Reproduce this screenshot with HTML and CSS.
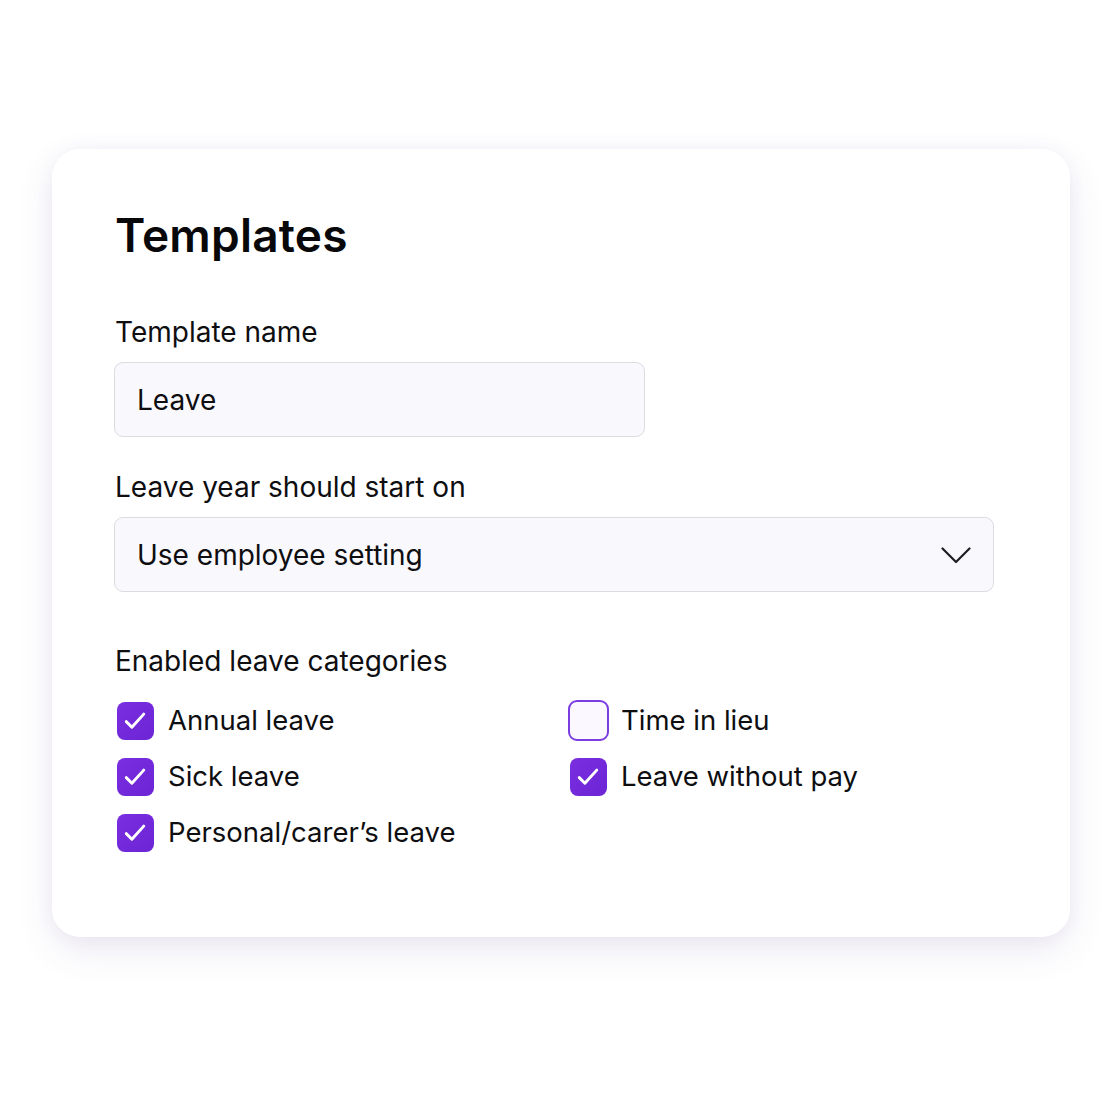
FILE: index.html
```html
<!DOCTYPE html>
<html lang="en">
<head>
<meta charset="utf-8">
<title>Templates</title>
<link rel="stylesheet" href="styles.css">
</head>
<body>
<main class="card">
  <h1 class="title">Templates</h1>

  <label class="label label-first">Template name</label>
  <div class="field">Leave</div>

  <label class="label">Leave year should start on</label>
  <div class="field select">
    <span>Use employee setting</span>
    <svg class="chevron" width="30" height="17" viewBox="0 0 30 17" aria-hidden="true">
      <path d="M1.5 1.5 L15 15 L28.5 1.5" fill="none" stroke="#1d1d22" stroke-width="2.2" stroke-linecap="round" stroke-linejoin="round"/>
    </svg>
  </div>

  <label class="label label-cats">Enabled leave categories</label>
  <div class="cats">
    <div class="cat"><span class="box checked"><svg viewBox="0 0 24 24"><path d="M5 12.5 L9.5 17 L19 6.5" fill="none" stroke="#fff" stroke-width="2.3" stroke-linecap="round" stroke-linejoin="round"/></svg></span><span class="cat-text">Annual leave</span></div>
    <div class="cat"><span class="box unchecked"></span><span class="cat-text">Time in lieu</span></div>
    <div class="cat"><span class="box checked"><svg viewBox="0 0 24 24"><path d="M5 12.5 L9.5 17 L19 6.5" fill="none" stroke="#fff" stroke-width="2.3" stroke-linecap="round" stroke-linejoin="round"/></svg></span><span class="cat-text">Sick leave</span></div>
    <div class="cat"><span class="box checked"><svg viewBox="0 0 24 24"><path d="M5 12.5 L9.5 17 L19 6.5" fill="none" stroke="#fff" stroke-width="2.3" stroke-linecap="round" stroke-linejoin="round"/></svg></span><span class="cat-text">Leave without pay</span></div>
    <div class="cat"><span class="box checked"><svg viewBox="0 0 24 24"><path d="M5 12.5 L9.5 17 L19 6.5" fill="none" stroke="#fff" stroke-width="2.3" stroke-linecap="round" stroke-linejoin="round"/></svg></span><span class="cat-text">Personal/carer’s leave</span></div>
  </div>
</main>
</body>
</html>
```

FILE: styles.css
```css
* { box-sizing: border-box; }

html, body {
  margin: 0;
  padding: 0;
  background: #ffffff;
}

body {
  font-family: Inter, "Noto Sans", "Liberation Sans", sans-serif;
  color: #0e0e11;
  width: 1120px;
  height: 1120px;
  padding: 149px 0 0 52px;
}

.card {
  width: 1018px;
  height: 788px;
  background: #ffffff;
  border-radius: 28px;
  box-shadow: 0 14px 36px rgba(96, 70, 150, 0.12), 0 0 18px rgba(96, 70, 150, 0.05);
  padding: 60px 76px 0 63px;
}

.title {
  margin: 0;
  font-size: 46px;
  line-height: 52px;
  font-weight: 600;
  letter-spacing: 0.2px;
  color: #08080a;
}

.label {
  display: block;
  font-size: 28px;
  line-height: 32px;
  font-weight: 400;
  color: #0e0e11;
  margin: 34px 0 14px;
}

.label-first { margin-top: 55px; }
.label-cats { margin-top: 53px; margin-bottom: 23px; }

.field {
  height: 75px;
  width: 531px;
  margin-left: -1px;
  border: 1.5px solid #dcdbe2;
  border-radius: 9px;
  background: #f9f9fd;
  display: flex;
  align-items: center;
  padding: 0 22px;
  font-size: 28px;
  color: #0e0e11;
}

.select {
  width: 880px;
  justify-content: space-between;
}

.chevron {
  margin-top: 1px;
}

.cats {
  display: grid;
  grid-template-columns: 453px 1fr;
  row-gap: 16px;
}

.cat {
  display: flex;
  align-items: center;
  gap: 13px;
  height: 40px;
}

.box {
  width: 40px;
  height: 40px;
  flex: none;
  display: flex;
  align-items: center;
  justify-content: center;
}

.box.checked {
  width: 37px;
  height: 38px;
  margin: 1px 1.5px 0 1.5px;
  border-radius: 8px;
  background: linear-gradient(135deg, #7a2fe0 0%, #6c24d4 100%);
}

.box.checked svg {
  width: 30px;
  height: 30px;
}

.box.unchecked {
  width: 41px;
  height: 41px;
  margin-right: -1px;
  border: 2px solid #7b3ddf;
  border-radius: 9px;
  background: #fbf9ff;
}

.cat-text {
  font-size: 27.5px;
  line-height: 32px;
  color: #0e0e11;
}
```
